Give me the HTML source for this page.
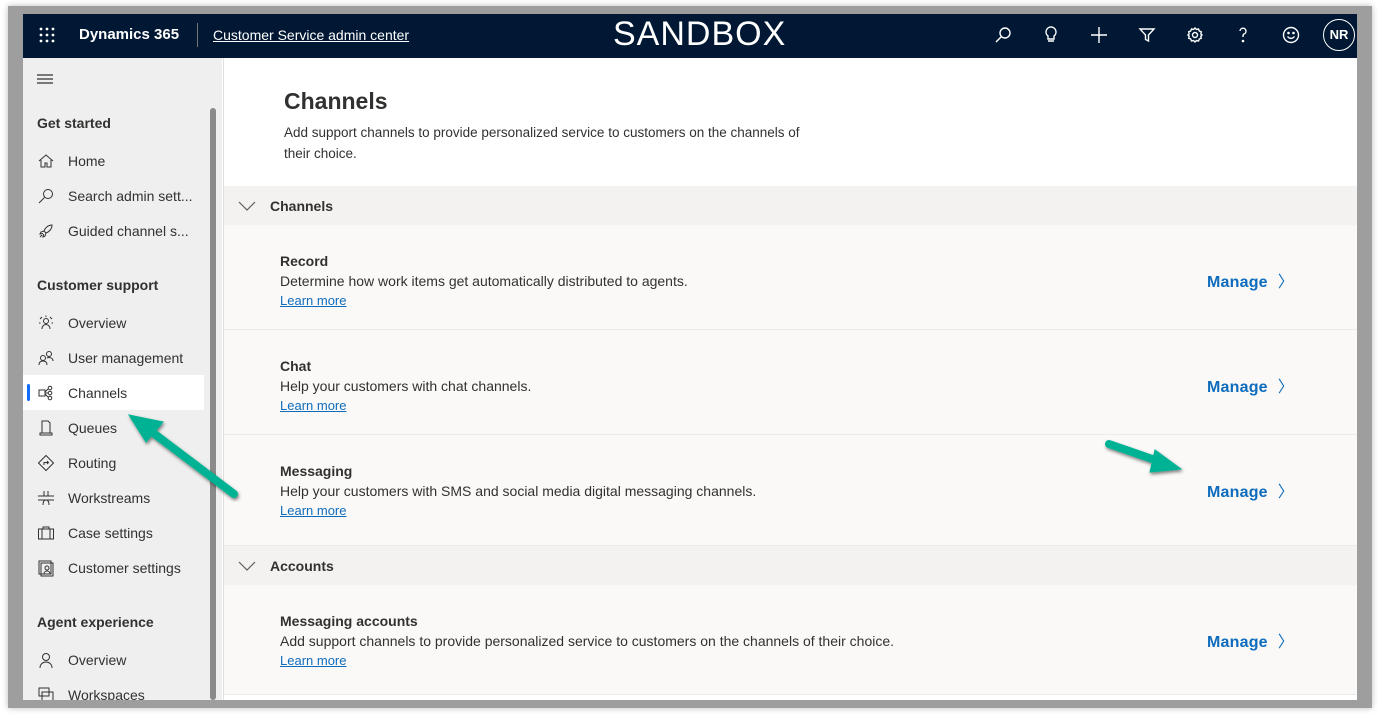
<!DOCTYPE html>
<html><head><meta charset="utf-8"><style>
*{box-sizing:border-box;margin:0;padding:0}
body{width:1378px;height:715px;background:#fff;font-family:"Liberation Sans",sans-serif;position:relative;overflow:hidden;color:#323130}
.frame{position:absolute;left:8px;top:6px;width:1364px;height:702px;background:#9e9e9e;box-shadow:0 0 6px #bbb}
.scr{position:absolute;left:23px;top:14px;width:1334px;height:686px;background:#fff;overflow:hidden}
.hdr{position:absolute;left:0;top:0;width:1334px;height:44px;background:#001833;color:#fff}
.side{position:absolute;left:0;top:44px;width:199px;height:642px;background:#efefef}
.main{position:absolute;left:200px;top:44px;width:1134px;height:642px;background:#fff;border-left:1px solid #e1dfdd}
.ni{position:absolute;left:14px;font-size:14px;color:#323130;display:flex;align-items:center}
.ni svg{width:18px;height:18px;margin-right:13px}
.sh{position:absolute;left:14px;font-size:14px;font-weight:bold;color:#323130}
.sec{position:absolute;left:0;width:1134px;height:39px;background:#f3f2f1;font-size:14px;font-weight:bold;display:flex;align-items:center}
.row{position:absolute;left:0;width:1134px;background:#faf9f8;border-bottom:1px solid #edebe9}
.row b{position:absolute;left:56px;top:28px;font-size:14px}
.row p{position:absolute;left:56px;top:48px;font-size:14px}
.row a{position:absolute;left:56px;top:68px;font-size:13px;color:#0f6cbd;text-decoration:underline}
.mg{position:absolute;left:983px;top:43px;font-size:16px;color:#0f6cbd;font-weight:bold;letter-spacing:.2px}
.mg span{font-weight:normal;margin-left:10px;color:#0f6cbd}
.hi svg{position:absolute;top:11px;width:20px;height:20px}
</style></head><body>
<div class="frame"></div>
<div class="scr">
<div class="hdr">
 <svg style="position:absolute;left:16px;top:13px" width="16" height="16" fill="#fff"><circle cx="2" cy="2" r="1.4"/><circle cx="8" cy="2" r="1.4"/><circle cx="14" cy="2" r="1.4"/><circle cx="2" cy="8" r="1.4"/><circle cx="8" cy="8" r="1.4"/><circle cx="14" cy="8" r="1.4"/><circle cx="2" cy="14" r="1.4"/><circle cx="8" cy="14" r="1.4"/><circle cx="14" cy="14" r="1.4"/></svg>
 <div style="position:absolute;left:56px;top:12px;font-size:15px;font-weight:bold">Dynamics 365</div>
 <div style="position:absolute;left:174px;top:9px;width:1px;height:24px;background:#777"></div>
 <div style="position:absolute;left:190px;top:13px;font-size:14px;text-decoration:underline">Customer Service admin center</div>
 <div style="position:absolute;left:590px;top:1px;font-size:34px;letter-spacing:1px">SANDBOX</div>
 <div class="hi" style="stroke:#fff;fill:none;stroke-width:1.4">
  <svg style="left:970px" viewBox="0 0 20 20"><circle cx="12" cy="8" r="5"/><path d="M8.5 11.5L3 17"/></svg>
  <svg style="left:1018px" viewBox="0 0 20 20"><path d="M10 2a5 5 0 0 0-3 9v3h6v-3a5 5 0 0 0-3-9zM7 16h6"/></svg>
  <svg style="left:1066px" viewBox="0 0 20 20"><path d="M10 2v16M2 10h16"/></svg>
  <svg style="left:1114px" viewBox="0 0 20 20"><path d="M3 4h14l-5.5 6v6l-3-1.5V10z"/></svg>
  <svg style="left:1162px" viewBox="0 0 20 20"><circle cx="10" cy="10" r="2.5"/><path d="M10 3l1.5 1.5 2-.5.8 2 2 .8-.5 2L17 10l-1.2 1.2.5 2-2 .8-.8 2-2-.5L10 17l-1.5-1.5-2 .5-.8-2-2-.8.5-2L3 10l1.2-1.2-.5-2 2-.8.8-2 2 .5z"/></svg>
  <svg style="left:1210px" viewBox="0 0 20 20"><path d="M7 6a3 3 0 1 1 4 3c-1 .6-1 1.3-1 3"/><circle cx="10" cy="16" r=".6" fill="#fff"/></svg>
  <svg style="left:1258px" viewBox="0 0 20 20"><circle cx="10" cy="10" r="7.5"/><path d="M6.5 11.5c2 2.5 5 2.5 7 0"/><circle cx="7.5" cy="8" r=".6" fill="#fff"/><circle cx="12.5" cy="8" r=".6" fill="#fff"/></svg>
 </div>
 <div style="position:absolute;left:1300px;top:5px;width:32px;height:32px;border:1.3px solid #fff;border-radius:50%;font-size:13px;font-weight:bold;text-align:center;line-height:30px">NR</div>
</div>
<div class="side">
 <svg style="position:absolute;left:14px;top:16px" width="16" height="10" stroke="#323130" stroke-width="1.2"><path d="M0 1h16M0 5h16M0 9h16"/></svg>
 <div style="position:absolute;left:187px;top:50px;width:6px;height:592px;background:#8a8a8a;border-radius:3px"></div>
 <div class="sh" style="top:57px">Get started</div>
 <div class="ni" style="top:94px"><svg viewBox="0 0 18 18" fill="none" stroke="#323130"><path d="M2 9L9 3l7 6M4 8v7h4v-4h2v4h4V8"/></svg>Home</div>
 <div class="ni" style="top:129px"><svg viewBox="0 0 18 18" fill="none" stroke="#323130"><circle cx="11" cy="7" r="4.5"/><path d="M7.5 10.5L2 16"/></svg>Search admin sett...</div>
 <div class="ni" style="top:164px"><svg viewBox="0 0 18 18" fill="none" stroke="#323130"><path d="M15 3c-4 0-7 3-8 6l2 2c3-1 6-4 6-8zM7 9l-3 1-1 2 3-.5M9 11l-1 3-2 1 .5-3M3 15l2-2"/></svg>Guided channel s...</div>
 <div class="sh" style="top:219px">Customer support</div>
 <div class="ni" style="top:256px"><svg viewBox="0 0 18 18" fill="none" stroke="#323130"><circle cx="9" cy="7" r="2.5"/><path d="M5 15c0-3 2-4.5 4-4.5s4 1.5 4 4.5M3 5l2-2M15 5l-2-2M9 1.5v1.5M2 9h1.5M14.5 9H16"/></svg>Overview</div>
 <div class="ni" style="top:291px"><svg viewBox="0 0 18 18" fill="none" stroke="#323130"><circle cx="6" cy="9" r="2.5"/><circle cx="12" cy="5" r="2.5"/><path d="M2 16c0-3 2-4 4-4s4 1 4 4M10 9c2-1 6-.5 6 3"/></svg>User management</div>
 <div style="position:absolute;left:0;top:317px;width:181px;height:35px;background:#fff"></div>
 <div style="position:absolute;left:4px;top:326px;width:3px;height:17px;background:#0f6cfd;border-radius:2px"></div>
 <div class="ni" style="top:326px"><svg viewBox="0 0 18 18" fill="none" stroke="#323130"><rect x="2" y="6" width="6" height="6"/><circle cx="13" cy="4" r="1.8"/><circle cx="13" cy="9" r="1.8"/><circle cx="13" cy="14" r="1.8"/><path d="M8 8l3-3M8 9h3M8 10l3 3"/></svg>Channels</div>
 <div class="ni" style="top:361px"><svg viewBox="0 0 18 18" fill="none" stroke="#323130"><path d="M5 2h6l2 2v10H5zM3 14h12v2H3z"/></svg>Queues</div>
 <div class="ni" style="top:396px"><svg viewBox="0 0 18 18" fill="none" stroke="#323130"><path d="M9 1.5L16.5 9 9 16.5 1.5 9z"/><path d="M7 11V8.5h4M10 7l1.5 1.5L10 10"/></svg>Routing</div>
 <div class="ni" style="top:431px"><svg viewBox="0 0 18 18" fill="none" stroke="#323130"><path d="M1 7h16M1 11h16M7 2v5M11 2v5M6 16c0-3 1-5 3-5s3 2 3 5"/></svg>Workstreams</div>
 <div class="ni" style="top:466px"><svg viewBox="0 0 18 18" fill="none" stroke="#323130"><rect x="1.5" y="5" width="15" height="10"/><path d="M6 5V3h6v2M5 5v10M13 5v10"/></svg>Case settings</div>
 <div class="ni" style="top:501px"><svg viewBox="0 0 18 18" fill="none" stroke="#323130"><rect x="2" y="2" width="12" height="13"/><rect x="4" y="4" width="12" height="13"/><circle cx="10" cy="9" r="2"/><path d="M7 15c0-2 1.5-3 3-3s3 1 3 3"/></svg>Customer settings</div>
 <div class="sh" style="top:556px">Agent experience</div>
 <div class="ni" style="top:593px"><svg viewBox="0 0 18 18" fill="none" stroke="#323130"><circle cx="9" cy="6" r="3.5"/><path d="M3 17c0-4 3-6 6-6s6 2 6 6"/></svg>Overview</div>
 <div class="ni" style="top:628px"><svg viewBox="0 0 18 18" fill="none" stroke="#323130"><rect x="2" y="2" width="10" height="8"/><rect x="5" y="6" width="11" height="10"/></svg>Workspaces</div>
</div>
<div class="main">
 <div style="position:absolute;left:60px;top:30px;font-size:23px;font-weight:bold;color:#323130">Channels</div>
 <div style="position:absolute;left:60px;top:64px;font-size:13.5px;line-height:21px;width:545px">Add support channels to provide personalized service to customers on the channels of their choice.</div>
 <div class="sec" style="top:128px"><svg style="margin:0 14px 0 14px" width="18" height="10" fill="none" stroke="#605e5c" stroke-width="1.2"><path d="M1 1l8 8 8-8"/></svg>Channels</div>
 <div class="row" style="top:167px;height:105px"><b>Record</b><p>Determine how work items get automatically distributed to agents.</p><a>Learn more</a><div class="mg">Manage<span>〉</span></div></div>
 <div class="row" style="top:272px;height:105px"><b>Chat</b><p>Help your customers with chat channels.</p><a>Learn more</a><div class="mg">Manage<span>〉</span></div></div>
 <div class="row" style="top:377px;height:111px"><b>Messaging</b><p>Help your customers with SMS and social media digital messaging channels.</p><a>Learn more</a><div class="mg">Manage<span>〉</span></div></div>
 <div class="sec" style="top:488px"><svg style="margin:0 14px 0 14px" width="18" height="10" fill="none" stroke="#605e5c" stroke-width="1.2"><path d="M1 1l8 8 8-8"/></svg>Accounts</div>
 <div class="row" style="top:527px;height:110px"><b>Messaging accounts</b><p>Add support channels to provide personalized service to customers on the channels of their choice.</p><a>Learn more</a><div class="mg">Manage<span>〉</span></div></div>
</div>
<svg style="position:absolute;left:0;top:0" width="1334" height="686">
 <defs><filter id="sh"><feDropShadow dx="1" dy="2" stdDeviation="1.5" flood-color="#000" flood-opacity=".5"/></filter></defs>
 <g filter="url(#sh)" fill="#00b294" stroke="#00b294" stroke-linecap="round">
  <path d="M211 480L125 415" stroke-width="8"/><path d="M106 401L140 408 123 428z"/>
  <path d="M1086 430L1138 448" stroke-width="8"/><path d="M1158 455L1132 436 1127 458z"/>
 </g>
</svg>
</div>
</body></html>
